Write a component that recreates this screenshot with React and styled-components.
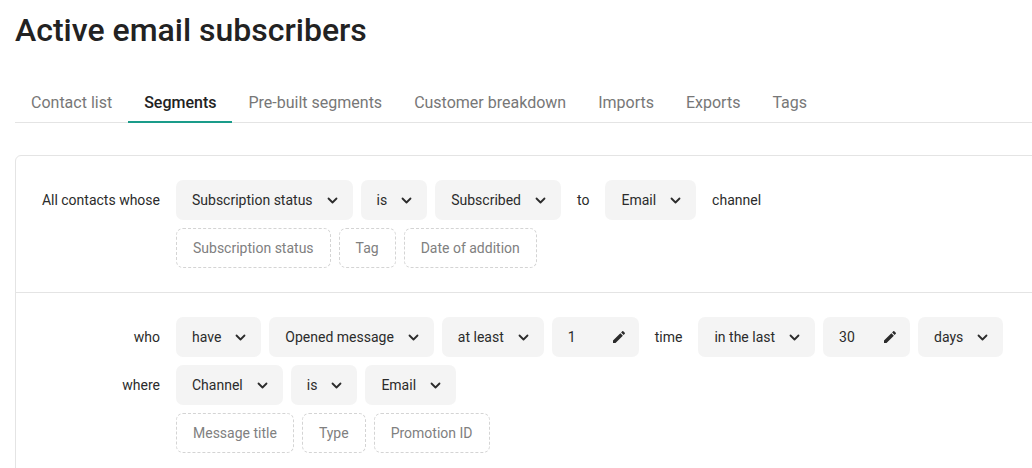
import React from "react";
import styled, { createGlobalStyle } from "styled-components";

const GlobalStyle = createGlobalStyle`
  * { box-sizing: border-box; }
  body {
    margin: 0;
    background: #fff;
    font-family: Roboto, "Liberation Sans", Arial, sans-serif;
    color: #2b2b2b;
    overflow: hidden;
  }
`;

const tabs = [
  "Contact list",
  "Segments",
  "Pre-built segments",
  "Customer breakdown",
  "Imports",
  "Exports",
  "Tags",
];

function Chevron() {
  return (
    <svg width="11" height="7" viewBox="0 0 11 7" fill="none">
      <path d="M1.5 1.5l4 4 4-4" stroke="#2b2b2b" strokeWidth="1.8" strokeLinecap="round" strokeLinejoin="round" />
    </svg>
  );
}

function Pencil() {
  return (
    <svg width="12" height="12" viewBox="3 3 18 18">
      <path
        fill="#2b2b2b"
        d="M3 17.25V21h3.75L17.81 9.94l-3.75-3.75L3 17.25zM20.71 7.04c.39-.39.39-1.02 0-1.41l-2.34-2.34c-.39-.39-1.02-.39-1.41 0l-1.83 1.83 3.75 3.75 1.83-1.83z"
      />
    </svg>
  );
}

function Select({ children }) {
  return (
    <Pill>
      {children}
      <Chevron />
    </Pill>
  );
}

function NumberField({ value }) {
  return (
    <Field>
      {value}
      <Pencil />
    </Field>
  );
}

function App() {
  return (
    <Page>
      <GlobalStyle />
      <Title>Active email subscribers</Title>
      <TabBar>
        {tabs.map((t) => (
          <Tab key={t} $active={t === "Segments"}>
            {t}
          </Tab>
        ))}
      </TabBar>

      <Card>
        <Section>
          <Row>
            <Label>All contacts whose</Label>
            <Controls>
              <Select>Subscription status</Select>
              <Select>is</Select>
              <Select>Subscribed</Select>
              <Word>to</Word>
              <Select>Email</Select>
              <Word>channel</Word>
            </Controls>
          </Row>
          <Row>
            <Label />
            <Controls>
              <Ghost>Subscription status</Ghost>
              <Ghost>Tag</Ghost>
              <Ghost>Date of addition</Ghost>
            </Controls>
          </Row>
        </Section>

        <Section>
          <Row>
            <Label>who</Label>
            <Controls>
              <Select>have</Select>
              <Select>Opened message</Select>
              <Select>at least</Select>
              <NumberField value="1" />
              <Word>time</Word>
              <Select>in the last</Select>
              <NumberField value="30" />
              <Select>days</Select>
            </Controls>
          </Row>
          <Row>
            <Label>where</Label>
            <Controls>
              <Select>Channel</Select>
              <Select>is</Select>
              <Select>Email</Select>
            </Controls>
          </Row>
          <Row>
            <Label />
            <Controls>
              <Ghost>Message title</Ghost>
              <Ghost>Type</Ghost>
              <Ghost>Promotion ID</Ghost>
            </Controls>
          </Row>
        </Section>
      </Card>
    </Page>
  );
}

export default App;

const Page = styled.div`
  width: 1200px;
  padding: 12px 0 0 15px;
`;

const Title = styled.h1`
  margin: 0;
  font-size: 32px;
  line-height: 37px;
  font-weight: 500;
  color: #222;
`;

const TabBar = styled.div`
  display: flex;
  margin-top: 34px;
  border-bottom: 1px solid #e4e4e4;
`;

const Tab = styled.div`
  padding: 0 16px;
  height: 40px;
  display: flex;
  align-items: center;
  font-size: 16px;
  font-weight: ${(p) => (p.$active ? 500 : 400)};
  color: ${(p) => (p.$active ? "#222" : "#777")};
  border-bottom: 2px solid ${(p) => (p.$active ? "#1a9c8a" : "transparent")};
  margin-bottom: -1px;
`;

const Card = styled.div`
  margin-top: 32px;
  border: 1px solid #e4e4e4;
  border-radius: 6px;
`;

const Section = styled.div`
  display: flex;
  flex-direction: column;
  gap: 8px;
  padding: 24px 0 24px;
  & + & {
    border-top: 1px solid #e4e4e4;
  }
`;

const Row = styled.div`
  display: flex;
  align-items: center;
  gap: 16px;
`;

const Label = styled.div`
  width: 144px;
  flex-shrink: 0;
  text-align: right;
  font-size: 14px;
  color: #2b2b2b;
`;

const Controls = styled.div`
  display: flex;
  align-items: center;
  gap: 8px;
`;

const Pill = styled.div`
  height: 40px;
  display: flex;
  align-items: center;
  gap: 14px;
  padding: 0 15px 0 16px;
  background: #f4f4f4;
  border-radius: 7px;
  font-size: 14px;
  color: #2b2b2b;
  white-space: nowrap;
`;

const Field = styled(Pill)`
  width: 87px;
  justify-content: space-between;
  padding-right: 14px;
`;

const Word = styled.span`
  font-size: 14px;
  color: #2b2b2b;
  padding: 0 8px;
`;

const Ghost = styled.div`
  height: 40px;
  display: flex;
  align-items: center;
  padding: 0 16px;
  border: 1px dashed #d4d4d4;
  border-radius: 7px;
  font-size: 14px;
  color: #808080;
  white-space: nowrap;
`;
